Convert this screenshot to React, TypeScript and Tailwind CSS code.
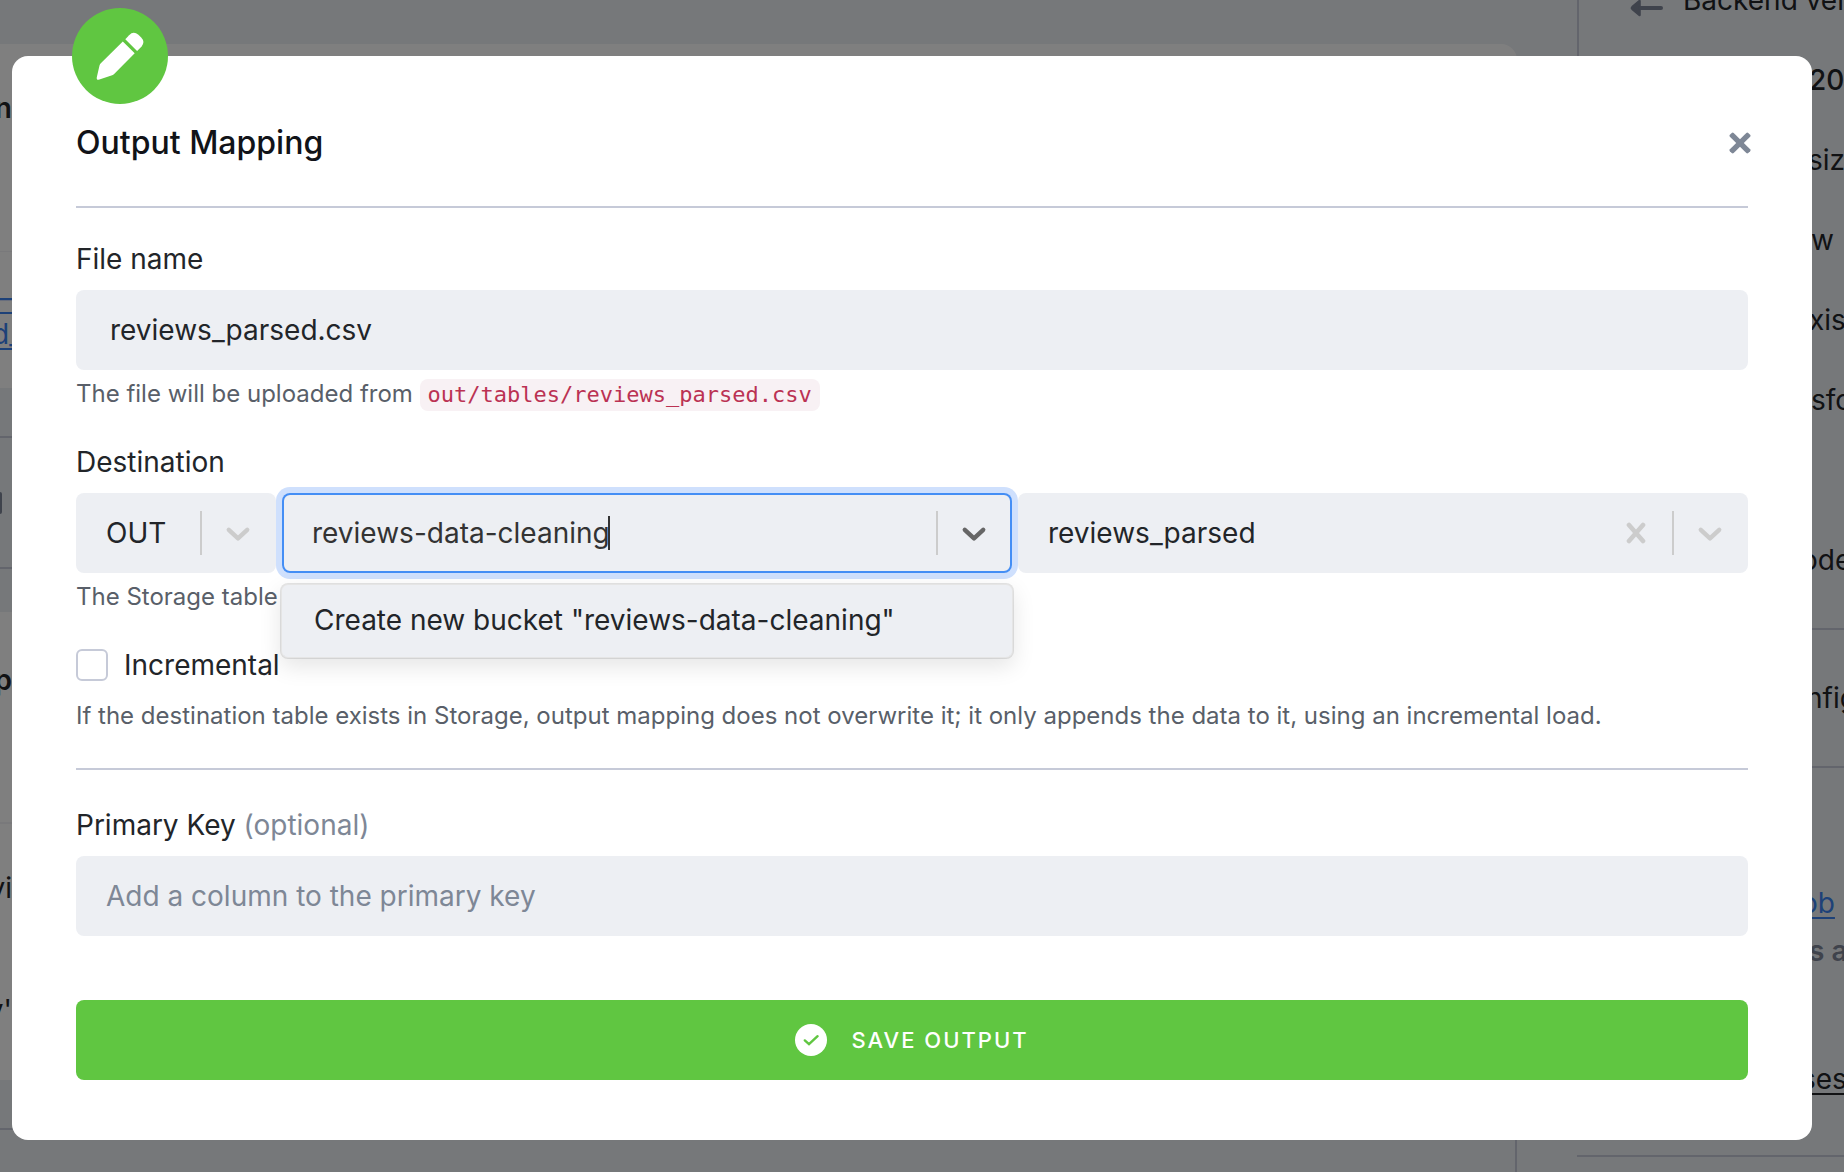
import { useState, type ReactNode } from "react";

function PencilIcon() {
  return (
    <svg viewBox="0 0 48 48" className="size-12 overflow-visible" fill="currentColor" aria-hidden="true">
      <path d="M26.8 9.6 38.7 21.2 17.9 42.2Q16.9 43.2 15.4 43.6L3.4 47.6Q.2 48.4 .8 45.2L3.5 33.6Q3.9 32.2 4.8 31.3Z" />
      <path d="M29.3 7.2 33.1 3.2Q37.5-1.4 42.4 2.8L45.2 5.6Q49.4 10 45.6 14.4L41.1 18.9Z" />
    </svg>
  );
}

function CloseIcon() {
  return (
    <svg viewBox="0 0 24 24" className="size-6" fill="currentColor" aria-hidden="true">
      <rect x="-1" y="9.3" width="26" height="5.4" rx="1.4" transform="rotate(45 12 12)" />
      <rect x="-1" y="9.3" width="26" height="5.4" rx="1.4" transform="rotate(-45 12 12)" />
    </svg>
  );
}

function ClearIcon() {
  return (
    <svg viewBox="0 0 20 22" className="h-[22px] w-5" fill="none" stroke="currentColor" strokeWidth="4.6" strokeLinecap="round" aria-hidden="true">
      <path d="m3 3 14 16M17 3 3 19" />
    </svg>
  );
}

function CheckCircleIcon() {
  return (
    <svg viewBox="0 0 32 32" className="size-8" aria-hidden="true">
      <circle cx="16" cy="16" r="16" fill="#fff" />
      <path d="m9.8 16.4 4.2 3.8 8.6-8" fill="none" stroke="#60c641" strokeWidth="2.4" strokeLinecap="round" strokeLinejoin="miter" />
    </svg>
  );
}

function ArrowLeftIcon() {
  return (
    <svg viewBox="0 0 32 16" className="h-4 w-8 overflow-visible" aria-hidden="true">
      <path d="M8.6 1v14L1.4 9Q.4 8 1.4 7Z" fill="#7e8698" stroke="#7e8698" strokeWidth="2.4" strokeLinejoin="round" />
      <path d="M9 8h21" stroke="#7e8698" strokeWidth="4" strokeLinecap="round" />
    </svg>
  );
}

function Indicator({ active = false }: { active?: boolean }) {
  return (
    <span
      className={`pointer-events-none flex h-11 shrink-0 items-center border-l-2 border-[#cccccc] pr-[26px] pl-6 ${
        active ? "text-[#666666]" : "text-[#cccccc]"
      }`}
    >
      <svg viewBox="0 0 24 16" className="h-4 w-6 overflow-visible" fill="none" stroke="currentColor" strokeWidth="4.4" strokeLinecap="round" strokeLinejoin="round" aria-hidden="true">
        <path d="m2.8 4.8 9.2 8.6 9.2-8.6" />
      </svg>
    </span>
  );
}

function Peek({ children }: { children: ReactNode }) {
  return <div className="flex w-3 justify-end">{children}</div>;
}

const sideRow = "h-20 pl-[232px]";

function Backdrop() {
  return (
    <div aria-hidden="true" className="absolute inset-0 flex overflow-hidden bg-[#edf0f5] text-[28px] leading-10 whitespace-nowrap">
      <div className="flex min-w-0 flex-1 flex-col overflow-hidden *:shrink-0">
        <div className="h-11" />
        <div className="mr-[60px] h-[208px] rounded-tr-2xl border-b border-[#f2f3f7] bg-white pt-[44px] font-semibold">
          <Peek>n</Peek>
        </div>
        <div className="mr-[60px] h-[136px] bg-white pt-[28px] leading-9 text-[#3b82f0] underline decoration-2 underline-offset-4">
          <Peek>–</Peek>
          <div className="-ml-2">d_</div>
        </div>
        <div className="h-12" />
        <div className="flex h-[133px] items-center border-y-2 border-[#c6cad8]">
          <span className="h-[22px] w-[2px] rounded-r bg-[#7e8698]" />
        </div>
        <div className="h-[43px]" />
        <div className="mr-[60px] h-[212px] border-b-2 border-[#f2f3f7] bg-white pt-[48px] font-semibold">
          <Peek>p</Peek>
        </div>
        <div className="mr-[60px] h-64 bg-white pt-11">
          <Peek>vi</Peek>
          <div className="h-[82px]" />
          <Peek>y'</Peek>
        </div>
        <div className="mr-[60px] flex-1 border-r-2 border-[#c6cad8] pt-12">
          <div className="border-t-2 border-[#c6cad8]" />
        </div>
      </div>
      <div className="-mt-5 flex w-[267px] shrink-0 flex-col overflow-hidden">
        <div className="border-l-2 border-[#c6cad8]">
          <div className="flex h-20 gap-5 pl-[52px]">
            <span className="pt-5">
              <ArrowLeftIcon />
            </span>
            <span>Backend version</span>
          </div>
          <div className="h-20 pl-[230px] font-medium">20</div>
          <div className="h-20 pl-[229px]">size</div>
          <div className={sideRow}>w</div>
          <div className="h-20 pl-[230px]">xist</div>
          <div className={sideRow}>sfor</div>
          <div className="h-20" />
          <div className="h-20 pl-[222px]">ode</div>
        </div>
        <div className="mt-2 border-y-2 border-[#c6cad8] pt-12 pb-12 pl-[229px]">nfig</div>
        <div className="pt-[115px] pl-[224px]">
          <span className="text-[#3b82f0] underline decoration-2 underline-offset-4">ob</span>
        </div>
        <div className="mt-2 pl-[232px] font-semibold text-[#7e8698]">s ago</div>
        <div className="mt-[88px] pl-[224px]">
          <span className="underline decoration-2 underline-offset-4">ses</span>
        </div>
        <div className="mt-14 border-t-2 border-[#c6cad8]" />
      </div>
    </div>
  );
}

const helpText = "text-[24px] text-[#595f69]";
const labelText = "mb-[11px] block w-fit";

export default function App() {
  const [file, setFile] = useState("reviews_parsed.csv");
  const [bucket, setBucket] = useState("reviews-data-cleaning");
  const [table, setTable] = useState("reviews_parsed");
  const [incremental, setIncremental] = useState(false);

  return (
    <div className="relative min-h-screen overflow-hidden font-[Inter,sans-serif] text-[#222529]">
      <Backdrop />
      <div className="absolute inset-0 bg-black/50" />
      <div className="relative pt-14 pr-8 pb-8 pl-3">
        <form
          role="dialog"
          aria-labelledby="dialog-title"
          onSubmit={(e) => e.preventDefault()}
          className="relative rounded-2xl bg-white px-16 pt-[66px] pb-[60px] text-[28px] leading-10"
        >
          <div className="absolute -top-12 left-[60px] flex size-24 items-center justify-center rounded-full bg-[#60c641] text-white">
            <PencilIcon />
          </div>

          <header className="flex items-center justify-between border-b-2 border-[#c6cad8] pb-[42px]">
            <h1 id="dialog-title" className="text-[32px] leading-[42px] font-medium text-[#111318]">
              Output Mapping
            </h1>
            <button type="button" aria-label="Close" className="-mr-1 text-[#7e8796]">
              <CloseIcon />
            </button>
          </header>

          <label htmlFor="file-name" className={`${labelText} mt-[31px]`}>
            File name
          </label>
          <input
            id="file-name"
            value={file}
            onChange={(e) => setFile(e.target.value)}
            className="block h-20 w-full rounded-lg bg-[#edeff3] px-[34px] outline-none"
          />
          <p className={`${helpText} mt-1`}>
            The file will be uploaded from{" "}
            <code className="inline-block rounded-lg bg-[#f8f1f4] px-2 font-['DejaVu_Sans_Mono',monospace] text-[22px] leading-8 text-[#bb3253]">
              out/tables/reviews_parsed.csv
            </code>
          </p>

          <label htmlFor="bucket" className={`${labelText} mt-7`}>
            Destination
          </label>
          <div className="flex gap-[6px]">
            <div className="flex h-20 w-[200px] shrink-0 items-center rounded-lg bg-[#edeff3]">
              <select aria-label="Stage" className="h-full min-w-0 flex-1 appearance-none pl-[30px] outline-none">
                <option>OUT</option>
              </select>
              <Indicator />
            </div>

            <div className="relative z-10 h-20 min-w-0 flex-1">
              <div className="flex h-full items-center rounded-lg bg-[#edeff3] shadow-[inset_0_0_0_2px_#448ef5,0_0_0_6px_#cfe0fd]">
                <div className="flex min-w-0 flex-1 items-center pl-[30px]">
                  <input
                    id="bucket"
                    role="combobox"
                    aria-expanded="true"
                    aria-controls="bucket-options"
                    value={bucket}
                    onChange={(e) => setBucket(e.target.value)}
                    className="field-sizing-content h-16 min-w-0 text-[#333333] caret-transparent outline-none"
                  />
                  <span className="-ml-[2px] h-[34px] w-[2px] shrink-0 bg-[#333333]" />
                </div>
                <Indicator active />
              </div>
              <ul
                id="bucket-options"
                role="listbox"
                className="absolute -inset-x-[2px] top-[90px] rounded-lg border-2 border-black/10 bg-[#edeff3] bg-clip-padding shadow-[0_8px_22px_rgba(0,0,0,0.1)]"
              >
                <li role="option" aria-selected="true" className="pt-[15px] pb-[17px] pl-8">
                  Create new bucket "{bucket}"
                </li>
              </ul>
            </div>

            <div className="flex h-20 min-w-0 flex-1 items-center rounded-lg bg-[#edeff3]">
              <select
                aria-label="Table"
                value={table}
                onChange={(e) => setTable(e.target.value)}
                className="h-full min-w-0 flex-1 appearance-none pl-[30px] outline-none"
              >
                <option value="">Select table</option>
                <option value="reviews_parsed">reviews_parsed</option>
              </select>
              <button type="button" aria-label="Clear table" onClick={() => setTable("")} className="px-[26px] text-[#cccccc]">
                <ClearIcon />
              </button>
              <Indicator />
            </div>
          </div>
          <p className={`${helpText} mt-1`}>The Storage table</p>

          <label className="mt-7 flex w-fit items-center gap-4">
            <input
              type="checkbox"
              checked={incremental}
              onChange={(e) => setIncremental(e.target.checked)}
              className="size-8 appearance-none rounded-md border-2 border-[#c6cad8] bg-white checked:bg-[#448ef5]"
            />
            Incremental
          </label>
          <p className={`${helpText} mt-[11px]`}>
            If the destination table exists in Storage, output mapping does not overwrite it; it only appends the data to it, using
            an incremental load.
          </p>

          <hr className="mt-8 border-t-2 border-[#c6cad8]" />

          <label htmlFor="primary-key" className={`${labelText} mt-[35px]`}>
            Primary Key <span className="text-[#7e8796]">(optional)</span>
          </label>
          <input
            id="primary-key"
            placeholder="Add a column to the primary key"
            className="block h-20 w-full rounded-lg bg-[#edeff3] px-[30px] outline-none placeholder:text-[#7e8796]"
          />

          <button
            type="submit"
            className="mt-16 flex h-20 w-full items-center justify-center gap-6 rounded-lg bg-[#60c641] text-[22px] font-medium tracking-[2px] text-white"
          >
            <CheckCircleIcon />
            SAVE OUTPUT
          </button>
        </form>
      </div>
    </div>
  );
}
